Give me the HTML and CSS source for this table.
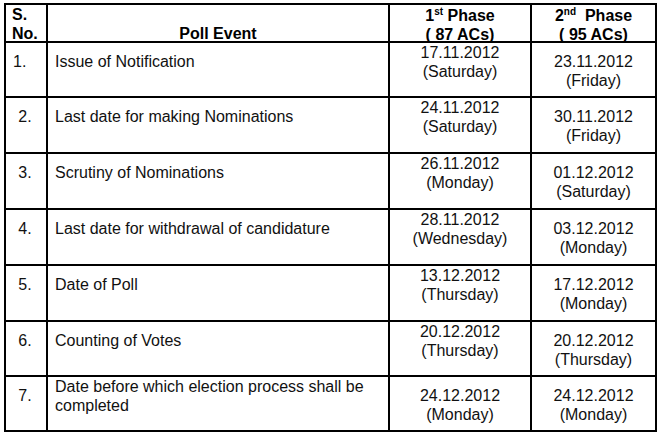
FILE: index.html
```html
<!DOCTYPE html>
<html lang="en">
<head>
<meta charset="utf-8">
<title>Poll Schedule</title>
<link rel="stylesheet" href="styles.css">
</head>
<body>
<div class="sched">
  <div class="cell head sno">S.<br>No.</div>
  <div class="cell head event-h">Poll Event</div>
  <div class="cell head phase">1<sup>st</sup> Phase<br>( 87 ACs)</div>
  <div class="cell head phase">2<sup>nd</sup>&nbsp; Phase<br>( 95 ACs)</div>

  <div class="cell num first">1.</div>
  <div class="cell ev">Issue of Notification</div>
  <div class="cell date hi">17.11.2012<br>(Saturday)</div>
  <div class="cell date">23.11.2012<br>(Friday)</div>

  <div class="cell num">2.</div>
  <div class="cell ev">Last date for making Nominations</div>
  <div class="cell date hi">24.11.2012<br>(Saturday)</div>
  <div class="cell date">30.11.2012<br>(Friday)</div>

  <div class="cell num">3.</div>
  <div class="cell ev">Scrutiny of Nominations</div>
  <div class="cell date hi">26.11.2012<br>(Monday)</div>
  <div class="cell date">01.12.2012<br>(Saturday)</div>

  <div class="cell num">4.</div>
  <div class="cell ev">Last date for withdrawal of candidature</div>
  <div class="cell date hi">28.11.2012<br>(Wednesday)</div>
  <div class="cell date">03.12.2012<br>(Monday)</div>

  <div class="cell num">5.</div>
  <div class="cell ev">Date of Poll</div>
  <div class="cell date hi">13.12.2012<br>(Thursday)</div>
  <div class="cell date">17.12.2012<br>(Monday)</div>

  <div class="cell num">6.</div>
  <div class="cell ev">Counting of Votes</div>
  <div class="cell date hi">20.12.2012<br>(Thursday)</div>
  <div class="cell date">20.12.2012<br>(Thursday)</div>

  <div class="cell num">7.</div>
  <div class="cell ev hi">Date before which election process shall be completed</div>
  <div class="cell date">24.12.2012<br>(Monday)</div>
  <div class="cell date">24.12.2012<br>(Monday)</div>
</div>
</body>
</html>
```

FILE: styles.css
```css
html, body {
  margin: 0;
  padding: 0;
  background: #fff;
}

body {
  font-family: "Liberation Sans", Arial, sans-serif;
  font-size: 16px;
  line-height: 19px;
  color: #111;
}

.sched {
  display: grid;
  grid-template-columns: 42px 342px 142px 125px;
  grid-template-rows: 38px 55px 56px 56px 56px 56px 55px 55px;
  margin: 3px 0 0 4px;
  width: max-content;
  border-left: 2px solid #000;
  border-top: 2px solid #000;
}

.cell {
  box-sizing: border-box;
  border-right: 2px solid #000;
  border-bottom: 2px solid #000;
  padding-top: 9px;
  overflow: visible;
}

.head {
  font-weight: bold;
  color: #000;
  padding-top: 0;
}

.sno {
  padding-left: 6px;
}

.event-h {
  text-align: center;
  padding-top: 19px;
}

.phase {
  text-align: center;
  padding-top: 1px;
}

.phase sup {
  font-size: 10px;
  line-height: 0;
  vertical-align: 6px;
}

.num {
  text-align: center;
  padding-right: 2px;
}

.num.first {
  text-align: left;
  padding-left: 7px;
}

.ev {
  padding-left: 7px;
}

.date {
  text-align: center;
}

.cell.hi {
  padding-top: 0;
}
```
